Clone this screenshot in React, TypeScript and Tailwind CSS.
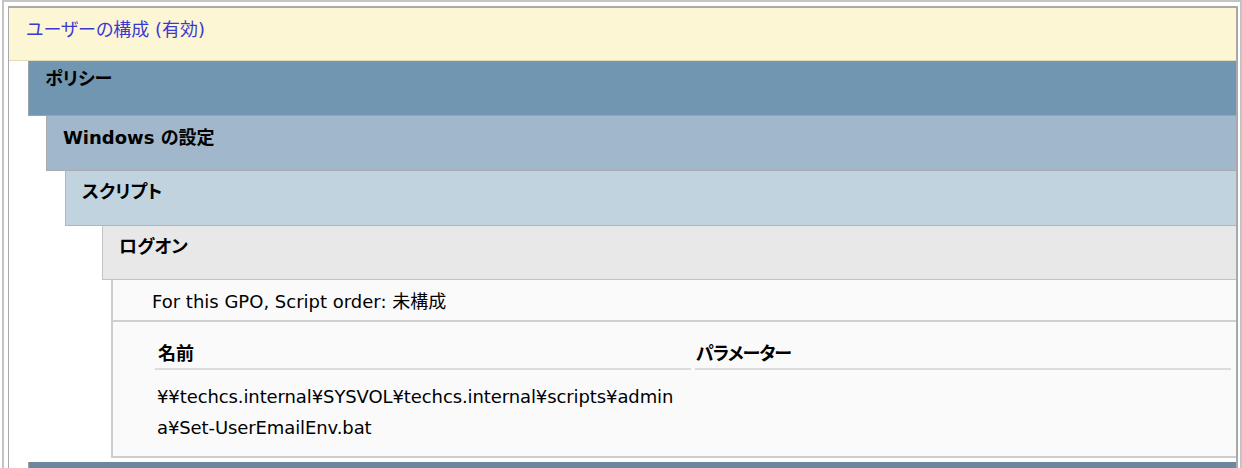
const jp = "font-['DejaVu_Sans','Noto_Sans_CJK_JP',sans-serif] [font-feature-settings:'palt']";

function Bar({ bg, border, pt, h, children, bold }: { bg: string; border: string; pt: string; h: string; children: React.ReactNode; bold?: boolean }) {
  return (
    <div className={`${bg} ${border} ${pt} ${h} border-l border-b pl-[16px] text-[18px] leading-[22px] text-black ${bold ? "font-bold" : "font-semibold"}`}>
      {children}
    </div>
  );
}

export default function App() {
  return (
    <div className={`w-[1242px] h-[468px] overflow-hidden bg-white ${jp}`}>
      <div className="h-[470px] ml-[2px] border-l-2 border-r-2 border-t-2 border-[#c4c4c4] pl-[4px] pr-[2px] pt-[4px]">
        <div className="h-full border-l border-t-2 border-r-2 border-[#a9a9a9]">
          {/* ユーザーの構成 */}
          <div className="h-[53px] bg-[#fdf6d5] border-b border-[#e4dcb8] pl-[17px] pt-[11px] text-[18px] leading-[22px] text-[#3a3ad0]">
            ユーザーの構成 (有効)
          </div>
          <div className="pl-[19px]">
            <Bar bg="bg-[#7096b2]" border="border-[#9aa3ab]" pt="pt-[7px]" h="h-[55px]" bold>
              ポリシー
            </Bar>
            <div className="pl-[18px]">
              <Bar bg="bg-[#a1b7cb]" border="border-[#a7abb0]" pt="pt-[11px]" h="h-[55px]">
                Windows の設定
              </Bar>
              <div className="pl-[19px]">
                <Bar bg="bg-[#c0d3df]" border="border-[#b0b5ba]" pt="pt-[10px]" h="h-[55px]">
                  スクリプト
                </Bar>
                <div className="pl-[37px]">
                  <Bar bg="bg-[#e8e8e8]" border="border-[#c2c2c2]" pt="pt-[10px]" h="h-[54px]">
                    ログオン
                  </Bar>
                  <div className="pl-[9px]">
                    <div className="h-[178px] bg-[#fafafa] border-l-2 border-b-2 border-[#cdcdcd]">
                      <div className="h-[42px] border-b-2 border-[#cfcfcf] pl-[39px] pt-[11px] text-[18px] leading-[22px] text-black">
                        For this GPO, Script order: 未構成
                      </div>
                      <div className="pl-[42px] pr-[5px] grid grid-cols-2 gap-x-[4px]">
                        <div className="h-[48px] border-b-2 border-[#dcdcdc] pl-[3px] pt-[21px] text-[18px] leading-[22px] font-semibold text-black">
                          名前
                        </div>
                        <div className="h-[48px] border-b-2 border-[#dcdcdc] pl-[1px] pt-[21px] text-[18px] leading-[22px] font-semibold text-black tracking-[-1px]">
                          パラメーター
                        </div>
                        <div className="pl-[2px] pt-[11px] text-[18px] leading-[31px] text-black whitespace-nowrap tracking-[-0.1px]">
                          ¥¥techcs.internal¥SYSVOL¥techcs.internal¥scripts¥admin
                          <br />
                          a¥Set-UserEmailEnv.bat
                        </div>
                        <div />
                      </div>
                    </div>
                  </div>
                </div>
              </div>
            </div>
            <div className="mt-[4px] h-[20px] bg-[#6f879c] border-l border-[#9aa3ab]" />
          </div>
        </div>
      </div>
    </div>
  );
}
